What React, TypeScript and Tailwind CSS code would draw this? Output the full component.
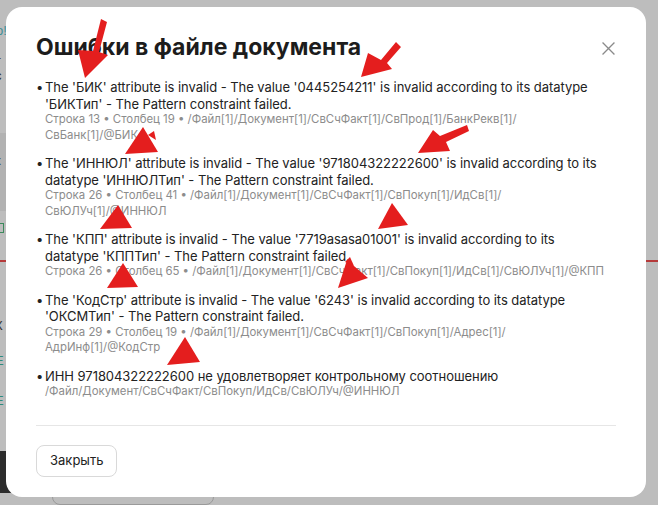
import React from 'react'

type Item = {
  text: string
  meta: string
}

const items: Item[] = [
  {
    text: "The 'БИК' attribute is invalid - The value '0445254211' is invalid according to its datatype 'БИКТип' - The Pattern constraint failed.",
    meta: 'Строка 13 • Столбец 19 • /Файл[1]/Документ[1]/СвСчФакт[1]/СвПрод[1]/БанкРекв[1]/СвБанк[1]/@БИК',
  },
  {
    text: "The 'ИННЮЛ' attribute is invalid - The value '971804322222600' is invalid according to its datatype 'ИННЮЛТип' - The Pattern constraint failed.",
    meta: 'Строка 26 • Столбец 41 • /Файл[1]/Документ[1]/СвСчФакт[1]/СвПокуп[1]/ИдСв[1]/СвЮЛУч[1]/@ИННЮЛ',
  },
  {
    text: "The 'КПП' attribute is invalid - The value '7719asasa01001' is invalid according to its datatype 'КППТип' - The Pattern constraint failed.",
    meta: 'Строка 26 • Столбец 65 • /Файл[1]/Документ[1]/СвСчФакт[1]/СвПокуп[1]/ИдСв[1]/СвЮЛУч[1]/@КПП',
  },
  {
    text: "The 'КодСтр' attribute is invalid - The value '6243' is invalid according to its datatype 'ОКСМТип' - The Pattern constraint failed.",
    meta: 'Строка 29 • Столбец 19 • /Файл[1]/Документ[1]/СвСчФакт[1]/СвПокуп[1]/Адрес[1]/АдрИнф[1]/@КодСтр',
  },
  {
    text: 'ИНН 971804322222600 не удовлетворяет контрольному соотношению',
    meta: '/Файл/Документ/СвСчФакт/СвПокуп/ИдСв/СвЮЛУч/@ИННЮЛ',
  },
]

// red markup drawn on top of the screenshot
const arrowShapes = [
  '101,19 107,22 99,52 108,55 85,78 78,50 93,51',
  '396,42 401,47 387,63 392,69 361,77 368,53 381,60',
  '125,154 158,152 143,127',
  '148,135 154,131 156,140',
  '467,125 469,131 446,142 450,151 418,153 433,130 440,136',
  '100,229 132,228 118,205',
  '378,229 408,225 392,203',
  '107,288 138,287 123,263',
  '338,288 368,278 347,260',
  '345,262 350,257 354,266',
  '167,365 200,362 185,337',
]

const Arrows = () => (
  <svg className="pointer-events-none absolute inset-0 h-full w-full" viewBox="0 0 658 505">
    {arrowShapes.map((p) => (
      <polygon key={p} points={p} fill="#e41e1e" />
    ))}
  </svg>
)

// the page behind the dimmed overlay, only a sliver of it shows
const Backdrop = () => (
  <div className="flex h-full w-full flex-col bg-[#bdbdbd] font-['Liberation_Sans',sans-serif] text-[13px] leading-[15px]">
    <div className="flex w-[8px] flex-col overflow-hidden pt-[23px] text-[#333]">
      <span className="-ml-[4px] text-[#3d8f97]">о!</span>
      <span className="-ml-[5px] mt-[15px]">т</span>
      <span className="-ml-[5px]">с</span>
    </div>
    <div className="mt-[50px] flex h-[78px] w-[8px] flex-col overflow-hidden bg-[#b2b2b2] pt-[20px]">
      <span className="-ml-[5px] text-[#333]">к</span>
      <span className="-ml-[5px] mt-[3px] text-[#7a5a10]">I</span>
    </div>
    <div className="-ml-[4px] mt-[12px] h-[10px] w-[8px] border border-[#3c8a5c]" />
    <div className="mt-[27px] h-[2px] w-full bg-[#b53a3a]" />
    <div className="flex w-[8px] flex-col overflow-hidden pt-[56px]">
      <span className="-ml-[5px] text-[#333]">К</span>
      <span className="-ml-[5px] mt-[20px] text-[#2f8a7a]">Е</span>
      <span className="-ml-[5px] mt-[25px] text-[#2f8a7a]">Е</span>
    </div>
    <div className="mt-auto flex items-start">
      <div className="h-[42px] w-[40px] rounded-br-[10px] bg-[#2c2c2c]" />
      <div className="ml-[12px] mt-[34px] h-[20px] w-[162px] rounded-[8px] border border-[#9a9a9a]" />
    </div>
  </div>
)

export default function App() {
  return (
    <div className="relative h-[505px] w-[658px] overflow-hidden font-['Inter',sans-serif]">
      <Backdrop />

      <div className="absolute left-[6px] top-[7px] flex h-[490px] w-[640px] flex-col rounded-[16px] bg-white px-[30px] pt-[26px]">
        <div className="flex items-start justify-between">
          <h2 className="text-[23px] font-bold leading-[28px] text-[#1c1c1c]">Ошибки в файле документа</h2>
          <button aria-label="Закрыть" className="mr-[1px] mt-[9px] text-[#8a8a8a]">
            <svg className="h-[13px] w-[13px]" viewBox="0 0 12 12" fill="none" stroke="currentColor" strokeWidth="1.2">
              <path d="M0.5 0.5 11.5 11.5M11.5 0.5 0.5 11.5" />
            </svg>
          </button>
        </div>

        <ul className="mt-[18px] flex flex-col gap-[12px] pr-[9px]">
          {items.map((item) => (
            <li key={item.meta} className="flex">
              <span className="w-[9px] shrink-0 text-[13px] leading-[16.5px] text-[#222]">•</span>
              <div className="min-w-0 flex-1">
                <p className="text-[13px] leading-[16.5px] tracking-[-0.05px] text-[#222]">{item.text}</p>
                <p className="text-[11.4px] leading-[15.5px] text-[#8c8c8c]">{item.meta}</p>
              </div>
            </li>
          ))}
        </ul>

        <div className="mt-auto border-t border-[#e6e6e6]" />
        <div className="pb-[20px] pt-[19px]">
          <button className="h-[32px] rounded-[8px] border border-[#d9d9d9] px-[13px] text-[13px] text-[#222]">
            Закрыть
          </button>
        </div>
      </div>

      <Arrows />
    </div>
  )
}
